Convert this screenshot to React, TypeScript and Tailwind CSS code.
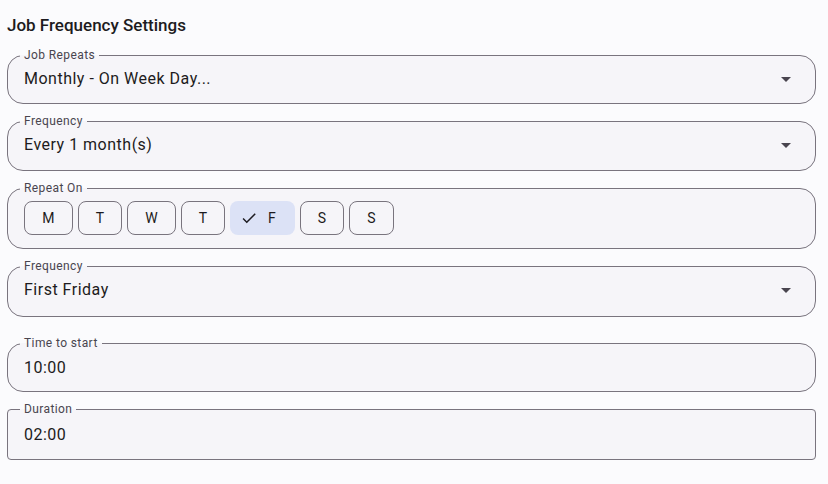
import React from "react";

const Arrow = () => (
  <svg viewBox="0 0 24 24" className="w-6 h-6 fill-[#49454f]">
    <path d="M7 10l5 5 5-5z" />
  </svg>
);

const Check = () => (
  <svg viewBox="0 0 24 24" className="w-[18px] h-[18px] fill-[#1d1b20]">
    <path d="M9 16.17L4.83 12l-1.42 1.41L9 19 21 7l-1.41-1.41z" />
  </svg>
);

function Field({
  label,
  children,
  radius = "rounded-[16px]",
  className = "",
}: {
  label: string;
  children: React.ReactNode;
  radius?: string;
  className?: string;
}) {
  return (
    <fieldset
      className={`border border-[#79747e] ${radius} bg-[#f6f5f9] pl-4 pr-[17px] ${className}`}
    >
      <legend className="-ml-1 px-1 text-[12px] leading-[12px] text-[#49454f] tracking-[0.4px]">
        {label}
      </legend>
      {children}
    </fieldset>
  );
}

function SelectField({ label, value, pad }: { label: string; value: string; pad: string }) {
  return (
    <Field label={label}>
      <div className={`flex items-center justify-between ${pad}`}>
        <span className="text-[16px] leading-6 tracking-[0.5px] text-[#1d1b20]">{value}</span>
        <Arrow />
      </div>
    </Field>
  );
}

function TextField({
  label,
  value,
  radius,
  className,
  pad,
}: {
  label: string;
  value: string;
  radius?: string;
  className?: string;
  pad: string;
}) {
  return (
    <Field label={label} radius={radius} className={className}>
      <div className={`${pad} text-[16px] leading-6 tracking-[0.5px] text-[#1d1b20]`}>
        {value}
      </div>
    </Field>
  );
}

const days = [
  { d: "M", w: "w-[49px]" },
  { d: "T", w: "w-[44px]" },
  { d: "W", w: "w-[49px]" },
  { d: "T", w: "w-[44px]" },
  { d: "F", w: "w-[65px]" },
  { d: "S", w: "w-[44px]" },
  { d: "S", w: "w-[45px]" },
];

export default function App() {
  return (
    <div
      className="w-[828px] h-[484px] bg-[#fbfbfd] pl-[7px] pr-[12px] pt-[13px]"
      style={{ fontFamily: "Roboto, 'Noto Sans', sans-serif" }}
    >
      <h2 className="text-[17px] leading-6 font-medium text-[#1d1b20]">
        Job Frequency Settings
      </h2>
      <div className="mt-[12px] flex flex-col gap-[11px]">
        <SelectField label="Job Repeats" value="Monthly - On Week Day..." pad="pt-[6px] pb-[12px]" />
        <SelectField label="Frequency" value="Every 1 month(s)" pad="pt-[6px] pb-[13px]" />
        <Field label="Repeat On">
          <div className="flex gap-[5px] pt-[7px] pb-[13px]">
            {days.map((x, i) =>
              i === 4 ? (
                <div
                  key={i}
                  className={`h-[34px] ${x.w} rounded-[8px] bg-[#dce2f6] flex items-center justify-start pl-[10px] gap-[10px] text-[14px] tracking-[0.1px] text-[#1d1b20]`}
                >
                  <Check />
                  <span>{x.d}</span>
                </div>
              ) : (
                <div
                  key={i}
                  className={`h-[34px] ${x.w} rounded-[8px] border border-[#79747e] flex items-center justify-center text-[14px] tracking-[0.1px] text-[#1d1b20]`}
                >
                  {x.d}
                </div>
              )
            )}
          </div>
        </Field>
        <SelectField label="Frequency" value="First Friday" pad="pt-[6px] pb-[14px]" />
        <TextField label="Time to start" value="10:00" className="mt-[9px]" pad="pt-[7px] pb-[11px]" />
        <TextField label="Duration" value="02:00" radius="rounded-[4px]" pad="pt-[8px] pb-[12px]" />
      </div>
    </div>
  );
}
